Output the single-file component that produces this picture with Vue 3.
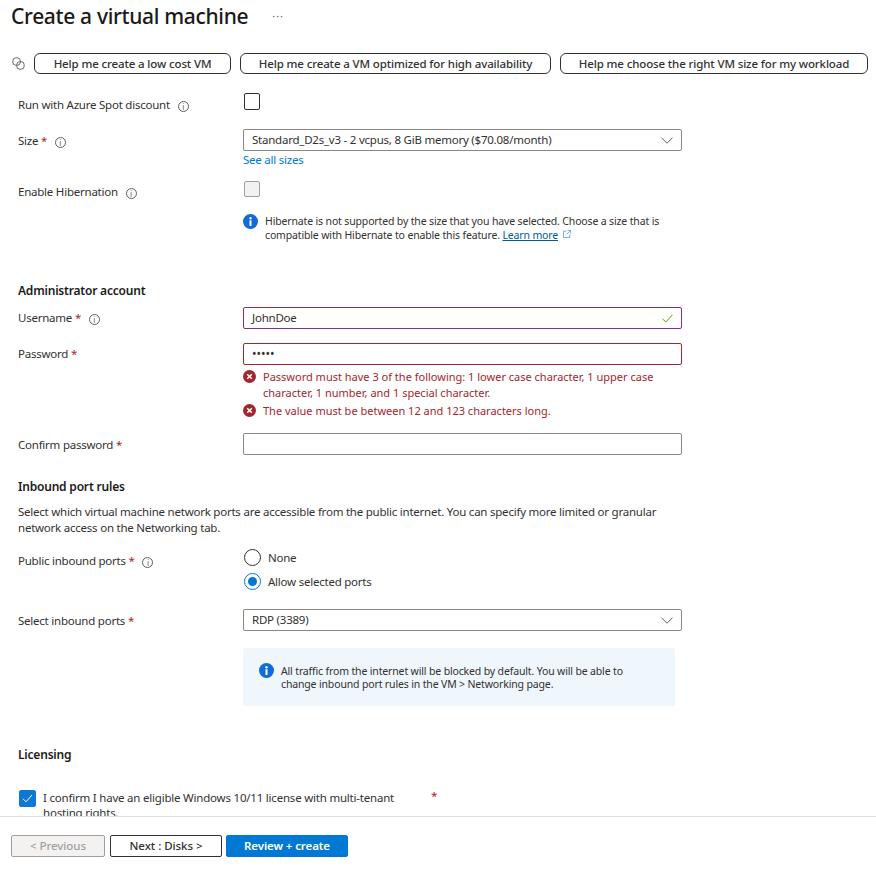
<script setup>
const assists = [
  'Help me create a low cost VM',
  'Help me create a VM optimized for high availability',
  'Help me choose the right VM size for my workload'
]
</script>

<template>
  <div class="page">
    <main class="content">
      <header class="title-row">
        <h1>Create a virtual machine</h1>
        <span class="more">···</span>
      </header>

      <div class="assist-row">
        <svg class="copilot" width="13" height="13" viewBox="0 0 15 15" fill="none" stroke="#605e5c" stroke-width="1.100">
          <rect x="1" y="1" width="8.500" height="8.500" rx="3.300" />
          <rect x="5.500" y="5.500" width="8.500" height="8.500" rx="3.300" />
        </svg>
        <button v-for="a in assists" :key="a" class="pill" type="button">{{ a }}</button>
      </div>

      <section class="row row-spot">
        <label class="label">Run with Azure Spot discount <i class="info">i</i></label>
        <div class="field"><span class="check"></span></div>
      </section>

      <section class="row row-size">
        <label class="label">Size <b>*</b> <i class="info">i</i></label>
        <div class="field">
          <div class="select">
            <span>Standard_D2s_v3 - 2 vcpus, 8 GiB memory ($70.08/month)</span>
            <svg width="12" height="7" viewBox="0 0 12 7" fill="none" stroke="#605e5c"><path d="M.5.8 6 6.200 11.500.8" /></svg>
          </div>
          <a class="link">See all sizes</a>
        </div>
      </section>

      <section class="row row-hib">
        <label class="label">Enable Hibernation <i class="info">i</i></label>
        <div class="field"><span class="check disabled"></span></div>
      </section>

      <section class="row row-hibinfo">
        <span></span>
        <div class="field notice">
          <svg class="dot-icon" width="15" height="15" viewBox="0 0 15 15">
            <circle cx="7.500" cy="7.500" r="7.500" fill="#0f6cd8" />
            <rect x="6.500" y="6.300" width="2" height="5.700" fill="#fff" />
            <circle cx="7.500" cy="4.200" r="1.200" fill="#fff" />
          </svg>
          <p>Hibernate is not supported by the size that you have selected. Choose a size that is compatible with Hibernate to enable this feature. <a class="learn">Learn more</a><svg class="ext" width="8" height="8" viewBox="0 0 8 8" fill="none" stroke="#5b9bd5" stroke-width=".8"><path d="M3.500 1.200H.5v6.300h6.300V4.500M4.500.4h3.100v3.100M7.500.5 3.500 4.500" /></svg></p>
        </div>
      </section>

      <h2 class="heading admin">Administrator account</h2>

      <section class="row row-user">
        <label class="label">Username <b>*</b> <i class="info">i</i></label>
        <div class="field">
          <div class="input ok">
            <span>JohnDoe</span>
            <svg width="11" height="9" viewBox="0 0 11 9" fill="none" stroke="#57a300" stroke-width="1"><path d="M.5 4.800 3.800 8 10.500.8" /></svg>
          </div>
        </div>
      </section>

      <section class="row row-pass">
        <label class="label">Password <b>*</b></label>
        <div class="field">
          <div class="input bad"><span class="dots">•••••</span></div>
          <div class="err first">
            <svg width="13" height="13" viewBox="0 0 13 13"><circle cx="6.500" cy="6.500" r="6.500" fill="#a4262c" /><path d="M4.200 4.200l4.600 4.600M8.800 4.200 4.200 8.800" stroke="#fff" stroke-width="1.600" /></svg>
            <p>Password must have 3 of the following: 1 lower case character, 1 upper case character, 1 number, and 1 special character.</p>
          </div>
          <div class="err second">
            <svg width="13" height="13" viewBox="0 0 13 13"><circle cx="6.500" cy="6.500" r="6.500" fill="#a4262c" /><path d="M4.200 4.200l4.600 4.600M8.800 4.200 4.200 8.800" stroke="#fff" stroke-width="1.600" /></svg>
            <p>The value must be between 12 and 123 characters long.</p>
          </div>
        </div>
      </section>

      <section class="row row-confirm">
        <label class="label">Confirm password <b>*</b></label>
        <div class="field"><div class="input"></div></div>
      </section>

      <h2 class="heading inbound">Inbound port rules</h2>
      <p class="desc">Select which virtual machine network ports are accessible from the public internet. You can specify more limited or granular network access on the Networking tab.</p>

      <section class="row row-public">
        <label class="label">Public inbound ports <b>*</b> <i class="info">i</i></label>
        <div class="field radios">
          <div class="radio-line"><span class="radio"></span>None</div>
          <div class="radio-line"><span class="radio on"></span>Allow selected ports</div>
        </div>
      </section>

      <section class="row row-ports">
        <label class="label">Select inbound ports <b>*</b></label>
        <div class="field">
          <div class="select">
            <span>RDP (3389)</span>
            <svg width="12" height="7" viewBox="0 0 12 7" fill="none" stroke="#605e5c"><path d="M.5.8 6 6.200 11.500.8" /></svg>
          </div>
        </div>
      </section>

      <section class="row row-box">
        <span></span>
        <div class="infobox">
          <svg class="dot-icon" width="15" height="15" viewBox="0 0 15 15">
            <circle cx="7.500" cy="7.500" r="7.500" fill="#0f6cd8" />
            <rect x="6.500" y="6.300" width="2" height="5.700" fill="#fff" />
            <circle cx="7.500" cy="4.200" r="1.200" fill="#fff" />
          </svg>
          <p>All traffic from the internet will be blocked by default. You will be able to change inbound port rules in the VM &gt; Networking page.</p>
        </div>
      </section>

      <h2 class="heading licensing">Licensing</h2>

      <section class="license">
        <span class="check checked">
          <svg width="11" height="9" viewBox="0 0 11 9" fill="none" stroke="#fff" stroke-width="1"><path d="M1 4.800 4 7.800 10 1" /></svg>
        </span>
        <p>I confirm I have an eligible Windows 10/11 license with multi-tenant hosting rights.</p>
        <b class="lic-star">*</b>
      </section>
    </main>

    <footer class="footer">
      <button class="btn prev" type="button">&lt; Previous</button>
      <button class="btn next" type="button">Next : Disks &gt;</button>
      <button class="btn primary" type="button">Review + create</button>
    </footer>
  </div>
</template>

<style>
html, body { margin: 0; overflow: hidden; background: #fff; }
</style>

<style scoped>
.page {
  width: 876px;
  height: 874px;
  display: flex;
  flex-direction: column;
  font-family: "Noto Sans", "Open Sans", sans-serif;
  font-size: 11.500px;
  line-height: 16px;
  letter-spacing: -0.23px;
  color: #323130;
  overflow: hidden;
}
.content { flex: 0 0 816px; height: 816px; overflow: hidden; padding-left: 18px; box-sizing: border-box; }
p { margin: 0; }
button { font-family: inherit; }

.title-row { display: flex; align-items: center; margin-left: -7px; height: 32px; }
h1 { margin: 0; font-size: 21px; font-weight: 500; line-height: 32px; color: #1b1a19; letter-spacing: -0.33px; }
.more { margin-left: 24px; font-size: 11px; color: #605e5c; letter-spacing: 1px; }

.assist-row { display: flex; align-items: flex-start; margin: 21px 0 0 -7px; height: 22px; }
.copilot { margin: 4px 9px 0 1px; }
.pill {
  height: 21px; padding: 0; margin-right: 9px; box-sizing: border-box;
  border: 1px solid #323130; border-radius: 6px; background: #fff;
  font-size: 11.500px; font-weight: 500; color: #323130; letter-spacing: -0.13px;
}
.pill:nth-of-type(1) { width: 197px; }
.pill:nth-of-type(2) { width: 311px; }
.pill:nth-of-type(3) { width: 308px; margin-right: 0; }

.row { display: grid; grid-template-columns: 225px 439px; }
.label { display: block; padding-top: 4px; }
.label b, .lic-star { color: #a4262c; font-weight: 400; }
.info {
  display: inline-block; width: 11px; height: 11px; margin-left: 5px; box-sizing: border-box;
  border: 1px solid #605e5c; border-radius: 50%;
  font: 8px/9px "Noto Sans", sans-serif; text-align: center; color: #605e5c; vertical-align: -1px; letter-spacing: 0;
}
.check {
  display: block; width: 16px; height: 16px; box-sizing: border-box; margin-left: 1px;
  border: 1px solid #323130; border-radius: 2px; background: #fff;
}
.check.disabled { background: #f3f2f1; border-color: #a19f9d; }
.check.checked { margin: 0; background: #0f78d4; border-color: #0f78d4; display: flex; align-items: center; justify-content: center; }

.row-spot { margin-top: 18px; height: 18px; }
.row-spot .check { height: 17px; }
.row-size { margin-top: 18px; }
.row-hib { margin-top: 13px; }
.row-hibinfo { margin-top: 14px; }
.row-hib .label { padding-top: 3px; }

.select, .input {
  height: 22px; box-sizing: border-box; border: 1px solid #8a8886; border-radius: 2px;
  display: flex; align-items: center; justify-content: space-between; padding: 0 8px;
}
.link { display: block; color: #0078d4; margin-top: 1px; }

.notice { display: flex; gap: 7px; }
.notice .dot-icon { flex: none; }
.notice p { font-size: 10.500px; line-height: 14px; width: 410px; letter-spacing: -0.15px; }
.learn { color: #005a9e; text-decoration: underline; }
.ext { margin-left: 5px; vertical-align: 1px; }

.heading { margin: 0; font-size: 12px; font-weight: 600; line-height: 16px; color: #1b1a19; letter-spacing: -0.2px; }
.admin { margin-top: 41px; }
.row-user { margin-top: 8px; }
.row-user .label { padding-top: 3px; }
.input.ok { border-color: #7a2e9e; }
.input.bad { border-color: #a4262c; }
.row-pass { margin-top: 14px; }
.row-pass .label { padding-top: 3px; }
.dots { letter-spacing: 0; font-size: 12px; }
.err { display: flex; gap: 7px; color: #a4262c; margin-top: 4px; letter-spacing: 0; }
.err svg { flex: none; margin-top: 1px; }
.err p { width: 400px; font-size: 11px; }
.err.second { margin-top: 2px; }
.row-confirm { margin-top: 14px; }

.inbound { margin-top: 24px; }
.desc { margin-top: 9px; width: 660px; }
.row-public { margin-top: 13px; }
.radio-line { display: flex; align-items: center; gap: 7px; height: 17px; margin-left: 1px; }
.radio-line + .radio-line { margin-top: 7px; }
.radio { width: 17px; height: 17px; box-sizing: border-box; border: 1px solid #323130; border-radius: 50%; position: relative; }
.radio.on { border-color: #0078d4; }
.radio.on::after { content: ""; position: absolute; left: 3px; top: 3px; width: 9px; height: 9px; border-radius: 50%; background: #0078d4; }
.row-ports { margin-top: 19px; }
.row-box { margin-top: 17px; }
.infobox {
  width: 432px; height: 58px; box-sizing: border-box; background: #eff6fc; border-radius: 2px;
  display: flex; align-items: flex-start; gap: 7px; padding: 17px 0 0 16px; font-size: 10.500px; line-height: 13px; letter-spacing: -0.15px;
}
.infobox p { width: 350px; }
.infobox .dot-icon { flex: none; margin-top: -2px; }
.licensing { margin-top: 41px; }
.license { display: flex; margin-top: 27px; }
.license .check { flex: none; margin-left: 1px; width: 17px; height: 17px; }
.license p { width: 376px; margin-left: 7px; line-height: 15px; letter-spacing: -0.21px; }
.lic-star { margin-left: 12px; margin-top: -2px; }

.footer {
  flex: 1; border-top: 1px solid #e1dfdd; box-sizing: border-box; padding: 18px 0 0 11px;
  display: flex; gap: 5px; align-items: flex-start;
}
.btn {
  height: 22px; box-sizing: border-box; border: 1px solid #323130; border-radius: 2px; background: #fff;
  font-size: 11.500px; font-weight: 500; color: #323130; padding: 0 0 2px; letter-spacing: -0.05px;
}
.btn.prev { width: 94px; background: #f3f2f1; border-color: #a19f9d; color: #a19f9d; }
.btn.next { width: 112px; }
.btn.primary { width: 122px; margin-left: -1px; background: #0078d4; border-color: #0078d4; color: #fff; font-weight: 600; letter-spacing: -0.1px; }
</style>
